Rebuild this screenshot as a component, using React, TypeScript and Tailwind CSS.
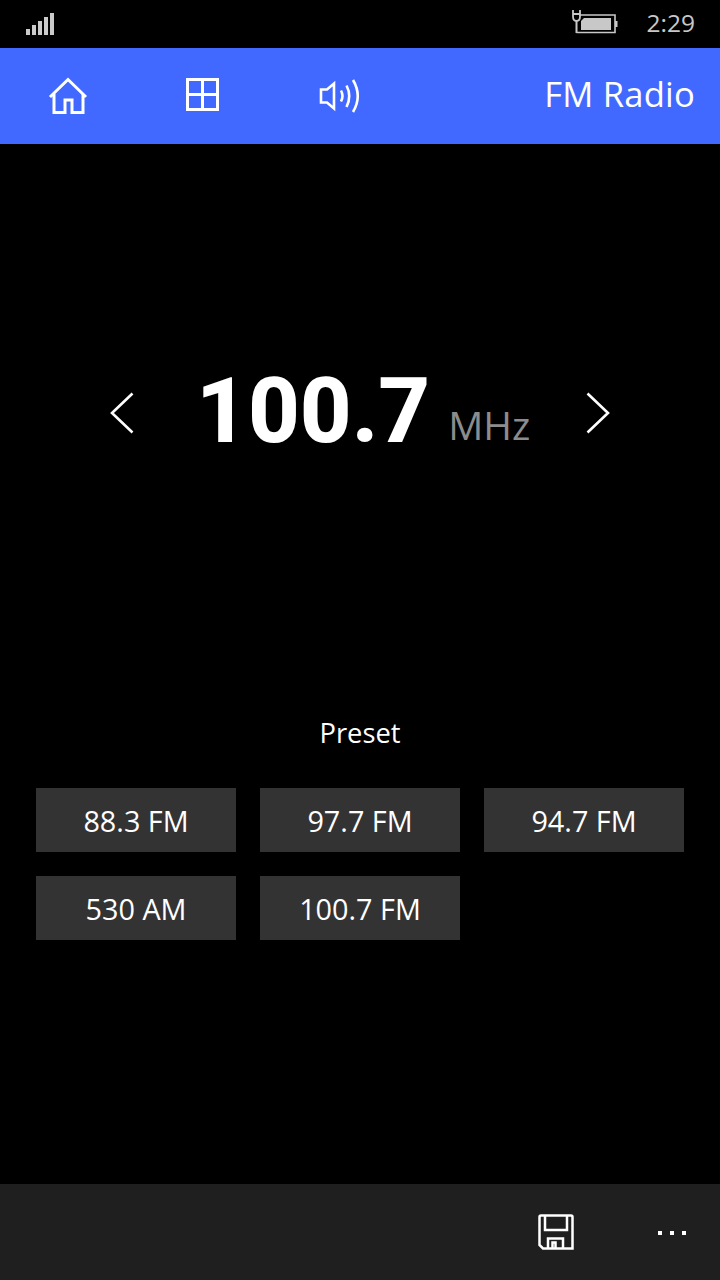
const PRESETS = ['88.3 FM', '97.7 FM', '94.7 FM', '530 AM', '100.7 FM'];

function HomeIcon() {
  return (
    <svg width="40" height="38" viewBox="0 0 40 38" fill="none" stroke="white" strokeWidth="3">
      <path d="M2 20 L20 2.5 L38 20" />
      <path d="M6 17 V35.5 H17 V23 H24 V35.5 H35 V17" />
    </svg>
  );
}

function GridIcon() {
  return (
    <svg width="33" height="33" viewBox="0 0 33 33" fill="none" stroke="white" strokeWidth="3" className="mb-[3px]">
      <rect x="1.5" y="1.5" width="30" height="30" />
      <path d="M16.5 1.5 V31.5 M1.5 16.5 H31.5" />
    </svg>
  );
}

function SpeakerIcon() {
  return (
    <svg width="42" height="36" viewBox="0 0 42 36" fill="none" stroke="white" strokeWidth="2.6" className="ml-[1px]">
      <path d="M2 11.5 H8 L15 5.5 V30.5 L8 24.5 H2 Z" />
      <path d="M22 12.5 Q25 18 22 23.5" />
      <path d="M27.5 7.5 Q33 18 27.5 29" />
      <path d="M34 2 Q43.5 18 34 34" />
    </svg>
  );
}

function SignalIcon() {
  return (
    <div className="flex items-end gap-[2px] opacity-90">
      <div className="w-[4px] h-[6px] bg-[#e0e0e0]" />
      <div className="w-[4px] h-[10px] bg-[#e0e0e0]" />
      <div className="w-[4px] h-[14px] bg-[#e0e0e0]" />
      <div className="w-[4px] h-[18px] bg-[#e0e0e0]" />
      <div className="w-[4px] h-[22px] bg-[#e0e0e0]" />
    </div>
  );
}

function BatteryIcon() {
  return (
    <svg width="46" height="24" viewBox="0 0 46 24" fill="none" className="mb-[4px]">
      <path d="M1 0 V6.5 Q1 11 4.5 11 Q8 11 8 6.5 V4 H1 M8 4 V0" stroke="#c8c8c8" strokeWidth="1.8" />
      <path d="M4.5 11 V23" stroke="#c8c8c8" strokeWidth="2" />
      <path d="M7 5 H43 V22.5 H4.5" stroke="#c8c8c8" strokeWidth="1.6" />
      <path d="M12 8 H39 V20 H9 V11 Z" fill="#c8c8c8" />
      <rect x="43" y="11" width="2.5" height="6" fill="#c8c8c8" />
    </svg>
  );
}

function SaveIcon() {
  return (
    <svg width="36" height="36" viewBox="0 0 36 36" fill="none" stroke="white" strokeWidth="2.5">
      <path d="M3 1.5 H33 Q34.5 1.5 34.5 3 V34.5 H5 L1.5 31 V3 Q1.5 1.5 3 1.5 Z" />
      <path d="M7 1.5 V16 H29 V1.5" />
      <path d="M10 34.5 V24.5 H25 V34.5" />
      <path d="M14.5 34.5 V28.5 H17.5 V34.5" />
    </svg>
  );
}

function Chevron({ flip }: { flip?: boolean }) {
  return (
    <svg width="24" height="42" viewBox="0 0 24 42" fill="none" stroke="white" strokeWidth="2.6" className={flip ? 'rotate-180 mt-[2px]' : 'mt-[2px]'}>
      <path d="M22.5 1.5 L2 21 L22.5 40.5" />
    </svg>
  );
}

export default function App() {
  return (
    <div className="w-[720px] h-[1280px] bg-black flex flex-col font-['Open_Sans',sans-serif] text-white overflow-hidden">
      {/* status bar */}
      <div className="h-[48px] flex items-center justify-between pl-[26px] pr-[25px]">
        <SignalIcon />
        <div className="flex items-center gap-[29px]">
          <BatteryIcon />
          <span className="text-[24.5px] text-[#c8c8c8] leading-none mb-[2px]">2:29</span>
        </div>
      </div>

      {/* top bar */}
      <div className="h-[96px] bg-[#4269ff] flex items-center pl-[48px] pr-[25px]">
        <div className="w-[138px] flex"><HomeIcon /></div>
        <div className="w-[132px] flex"><GridIcon /></div>
        <SpeakerIcon />
        <span className="ml-auto text-[34.6px] leading-none tracking-[0.2px] mb-[4px]">FM Radio</span>
      </div>

      {/* tuner */}
      <div className="flex-1 flex flex-col px-[36px]">
        <div className="mt-[223px] flex items-center pl-[74px]">
          <Chevron />
          <div className="w-[452px] pl-[62px] flex items-baseline">
            <span className="font-['Roboto',sans-serif] font-extrabold text-[90px] leading-none">100.7</span>
            <span className="ml-[18px] text-[39px] leading-none text-[#8c8c8c] -translate-y-[2px]">MHz</span>
          </div>
          <Chevron flip />
        </div>

        <div className="mt-[258px] text-center text-[27.3px] leading-[36px]">Preset</div>

        <div className="mt-[37px] grid grid-cols-3 gap-x-[24px] gap-y-[24px]">
          {PRESETS.map((p) => (
            <div key={p} className="h-[64px] pt-[2px] bg-[#333333] flex items-center justify-center text-[28.8px]">
              {p}
            </div>
          ))}
        </div>
      </div>

      {/* app bar */}
      <div className="h-[96px] bg-[#1f1f1f] flex items-center pl-[538px] pr-[34px] justify-between">
        <SaveIcon />
        <div className="flex gap-[8px] mt-[2px]">
          <div className="w-[4px] h-[4px] bg-white" />
          <div className="w-[4px] h-[4px] bg-white" />
          <div className="w-[4px] h-[4px] bg-white" />
        </div>
      </div>
    </div>
  );
}
